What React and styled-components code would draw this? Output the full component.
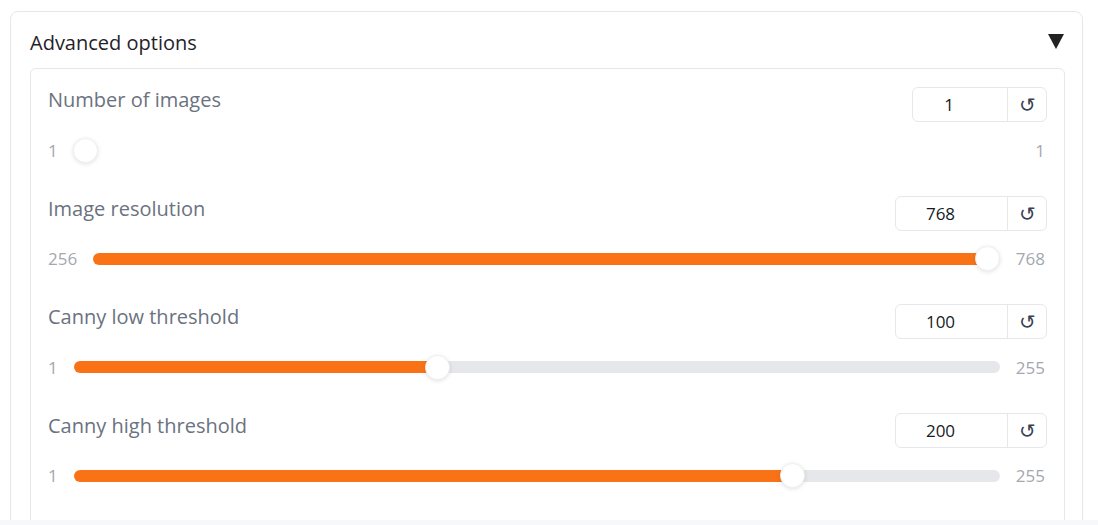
import React from "react";
import styled, { createGlobalStyle } from "styled-components";

const GlobalStyle = createGlobalStyle`
  html, body {
    margin: 0;
    background: #f7f8fa;
  }
  * {
    box-sizing: border-box;
  }
`;

const Page = styled.div`
  height: 520px;
  overflow: hidden;
  background: #ffffff;
  padding: 11px 15px 0 10px;
  font-family: "Open Sans", "Noto Sans", sans-serif;
`;

const Panel = styled.div`
  border: 1px solid #e5e7eb;
  border-radius: 8px;
  padding: 0 17px 0 19px;
  min-height: 600px;
`;

const PanelHeader = styled.div`
  height: 56px;
  display: flex;
  align-items: center;
  justify-content: space-between;
`;

const PanelTitle = styled.span`
  font-size: 20px;
  color: #1f2328;
  padding-top: 4px;
`;

const Caret = styled.span`
  width: 0;
  height: 0;
  border-left: 8px solid transparent;
  border-right: 8px solid transparent;
  border-top: 15px solid #222222;
  margin-right: 1px;
  margin-top: 3px;
`;

const Inner = styled.div`
  border: 1px solid #e5e7eb;
  border-radius: 6px;
  padding: 18px 17px 0 17px;
  min-height: 520px;
  display: flex;
  flex-direction: column;
  gap: 33.5px;
`;

const Field = styled.div`
  display: flex;
  flex-direction: column;
  gap: 16px;
`;

const FieldHeader = styled.div`
  height: 35px;
  display: flex;
  justify-content: space-between;
  align-items: flex-start;
`;

const Label = styled.span`
  font-size: 20px;
  line-height: 26px;
  color: #6b7280;
`;

const NumberGroup = styled.div`
  height: 35px;
  display: flex;
  border: 1px solid #e5e7eb;
  border-radius: 6px;
`;

const NumberValue = styled.div`
  width: ${(props) => props.width - 1}px;
  padding-right: 22px;
  display: flex;
  align-items: center;
  justify-content: center;
  font-size: 17px;
  color: #161b22;
`;

const ResetButton = styled.div`
  width: 39px;
  border-left: 1px solid #e5e7eb;
  display: flex;
  align-items: center;
  justify-content: center;
  font-size: 20px;
  color: #374151;
`;

const SliderRow = styled.div`
  height: 24px;
  display: flex;
  align-items: center;
  gap: 16px;
`;

const RangeLabel = styled.span`
  font-size: 17px;
  color: #a3a8b0;
  margin-right: ${(props) => (props.end ? "2px" : "0")};
`;

const Track = styled.div`
  flex: 1;
  height: 12px;
  border-radius: 6px;
  position: relative;
  background: ${(props) => (props.empty ? "transparent" : "#e5e7eb")};
`;

const Thumb = styled.div`
  position: absolute;
  top: 50%;
  width: 25px;
  height: 25px;
  margin-top: -12.5px;
  border-radius: 50%;
  background: #ffffff;
  border: 1px solid #f0f0f0;
  box-shadow: 0 1px 4px rgba(0, 0, 0, 0.12);
`;

const fields = [
  { label: "Number of images", min: 1, max: 1, value: 1, width: 95 },
  { label: "Image resolution", min: 256, max: 768, value: 768, width: 112 },
  { label: "Canny low threshold", min: 1, max: 255, value: 100, width: 112 },
  { label: "Canny high threshold", min: 1, max: 255, value: 200, width: 112 },
];

const Slider = ({ min, max, value }) => {
  const empty = max === min;
  const f = empty ? 0 : (value - min) / (max - min);
  const pos = `calc(12px + ${f} * (100% - 24px))`;
  return (
    <SliderRow>
      <RangeLabel>{min}</RangeLabel>
      <Track
        empty={empty}
        style={
          empty
            ? undefined
            : { background: `linear-gradient(to right, #f97316 ${pos}, #e5e7eb ${pos})` }
        }
      >
        <Thumb style={{ left: `calc(${pos} - 12.5px)` }} />
      </Track>
      <RangeLabel end>{max}</RangeLabel>
    </SliderRow>
  );
};

const App = () => {
  return (
    <Page>
      <GlobalStyle />
      <Panel>
        <PanelHeader>
          <PanelTitle>Advanced options</PanelTitle>
          <Caret />
        </PanelHeader>
        <Inner>
          {fields.map((field) => (
            <Field key={field.label}>
              <FieldHeader>
                <Label>{field.label}</Label>
                <NumberGroup>
                  <NumberValue width={field.width}>{field.value}</NumberValue>
                  <ResetButton>↺</ResetButton>
                </NumberGroup>
              </FieldHeader>
              <Slider min={field.min} max={field.max} value={field.value} />
            </Field>
          ))}
        </Inner>
      </Panel>
    </Page>
  );
};

export default App;
